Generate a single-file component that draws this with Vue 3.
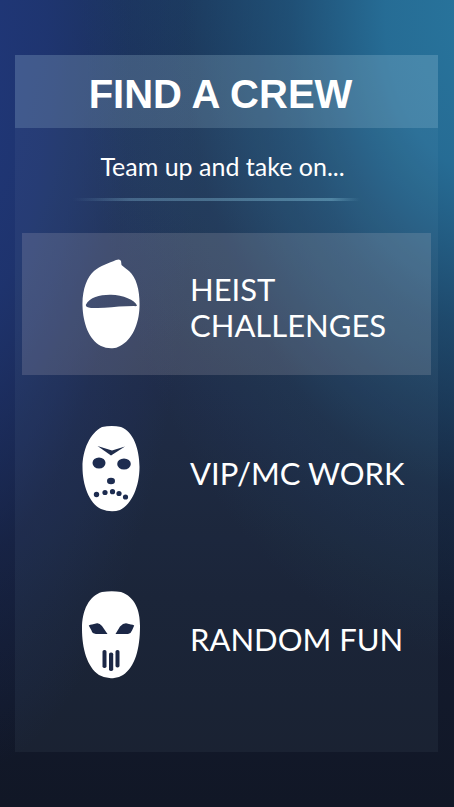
<script setup>
import { ref } from 'vue'

const selected = ref('heist')
const options = [
  { id: 'heist', label: 'Heist Challenges' },
  { id: 'work', label: 'VIP/MC Work' },
  { id: 'fun', label: 'Random Fun' },
]
</script>

<template>
  <main class="page">
    <section class="panel">
      <header class="header">
        <h1 class="title">FIND A CREW</h1>
      </header>
      <p class="subtitle">Team up and take on...</p>
      <div class="divider"></div>
      <div class="options">
        <button
          v-for="option in options"
          :key="option.id"
          type="button"
          class="option"
          :class="{ selected: selected === option.id }"
          :aria-pressed="selected === option.id"
          @click="selected = option.id"
        >
          <svg v-if="option.id === 'heist'" class="mask" viewBox="0 0 58 90" aria-hidden="true">
            <path fill="#fff" fill-rule="evenodd" d="M34 1Q38-.5 39 2L39.500 6Q43 9 47 12C55 19 58 33 57.500 48C57 65 50 81 38 87Q34 89.500 30 89.300Q24 89.500 19 87C7 81 1 64 .5 47C0 31 5 18 12 12C18 7 27 4 34 1ZM4 45.500C8 38 18 35.500 29 35.700C41 36 53 41 55 46.500Q54.500 47.500 52 47L37 47.400C27 48.500 18 49 9 49Q3 48 4 45.500Z" />
          </svg>
          <svg v-else-if="option.id === 'work'" class="mask" viewBox="0 0 58 90" aria-hidden="true">
            <path fill="#fff" fill-rule="evenodd" d="M20 2Q30 0 39 2C51 6 57.500 24 57.500 42C57.500 61 50 79 38 85Q29 88 19 84C7 78 .5 60 .5 42C.5 25 8 8 20 2ZM15.500 21L29 30.500L43 21.500L30 25.500Z" />
            <g fill="#1d2c50">
              <ellipse cx="17" cy="38" rx="6.500" ry="5.500" />
              <ellipse cx="42" cy="39" rx="6.800" ry="5.600" />
              <ellipse cx="29" cy="56" rx="4" ry="3.200" />
              <circle cx="14.500" cy="69.500" r="2.700" />
              <circle cx="23" cy="67.500" r="2.600" />
              <circle cx="30.500" cy="66.700" r="2.600" />
              <circle cx="37" cy="68.500" r="2.600" />
              <circle cx="43.500" cy="72" r="2.600" />
            </g>
          </svg>
          <svg v-else class="mask" viewBox="0 0 58 90" aria-hidden="true">
            <path fill="#fff" d="M20 1Q30-.5 39 1C53 6 58 19 58 35C58 58 53 76 41 84Q36 87.500 30 87.200Q23 87.500 17 84C5 76 0 57 0 38C0 19 7 5 20 1Z" />
            <g fill="#1b2746">
              <path d="M7 35Q6 34 10 33.500L15 32.300Q17.500 32 20 35L25.500 43L14 43Q10 42.500 9.500 39.500ZM52 35Q53 34 49 33.500L44 32.300Q41 32.300 38 35.500L33.500 43L46 43Q49 42.500 50 39.500Z" />
              <rect x="20.500" y="59" width="4" height="18" rx="1.800" />
              <rect x="27" y="61.500" width="4.200" height="18.500" rx="1.800" />
              <rect x="33.500" y="59" width="4" height="17.500" rx="1.800" />
            </g>
          </svg>
          <span class="label">{{ option.label }}</span>
        </button>
      </div>
    </section>
  </main>
</template>

<style>
body {
  margin: 0;
  background: #111726;
}
</style>

<style scoped>
.page {
  box-sizing: border-box;
  min-height: 100vh;
  padding: 55px 16px 55px 15px;
  color: #fff;
  font-family: Lato, sans-serif;
  background:
    radial-gradient(ellipse 88% 80% at 106% 2%, #28759d 0%, rgba(39, 113, 154, 0.92) 24%, rgba(34, 96, 134, 0.6) 48%, rgba(30, 78, 110, 0.22) 74%, rgba(28, 60, 90, 0) 100%),
    radial-gradient(ellipse 52% 88% at -8% 8%, #20377a 0%, rgba(31, 53, 116, 0.85) 35%, rgba(28, 46, 100, 0.36) 70%, rgba(24, 38, 80, 0) 100%),
    linear-gradient(180deg, #1c365c 0%, #1b2e50 24%, #17223e 48%, #131b2f 74%, #111726 100%);
}

.panel {
  padding-bottom: 45px;
  background: rgba(170, 200, 225, 0.06);
}

.header {
  display: flex;
  justify-content: center;
  align-items: center;
  height: 73px;
  padding: 4px 12px 0 0;
  box-sizing: border-box;
  background: rgba(190, 220, 240, 0.18);
}

.title {
  margin: 0;
  font: bold 40px/48px "Liberation Sans", Arial, sans-serif;
  white-space: nowrap;
}

.subtitle {
  margin: 22px 8px 0 0;
  font-size: 25px;
  line-height: 32px;
  text-align: center;
}

.divider {
  height: 3px;
  margin: 16px 78px 0 58px;
  background: linear-gradient(90deg, rgba(120, 170, 200, 0), rgba(120, 170, 200, 0.4) 20%, rgba(120, 180, 205, 0.5) 90%, rgba(120, 180, 205, 0));
}

.options {
  display: grid;
  gap: 24px;
  margin: 32px 7px 0;
}

.option {
  display: flex;
  align-items: center;
  gap: 50px;
  min-height: 142px;
  padding: 0 16px 0 60px;
  border: 0;
  background: transparent;
  color: inherit;
  font-family: inherit;
  font-size: 31px;
  line-height: 36px;
  text-align: left;
  text-transform: uppercase;
  cursor: pointer;
}

.option.selected {
  background: rgba(220, 205, 215, 0.17);
}

.mask {
  flex: none;
  width: 58px;
  height: 90px;
}

.label {
  padding-top: 5px;
}
</style>
